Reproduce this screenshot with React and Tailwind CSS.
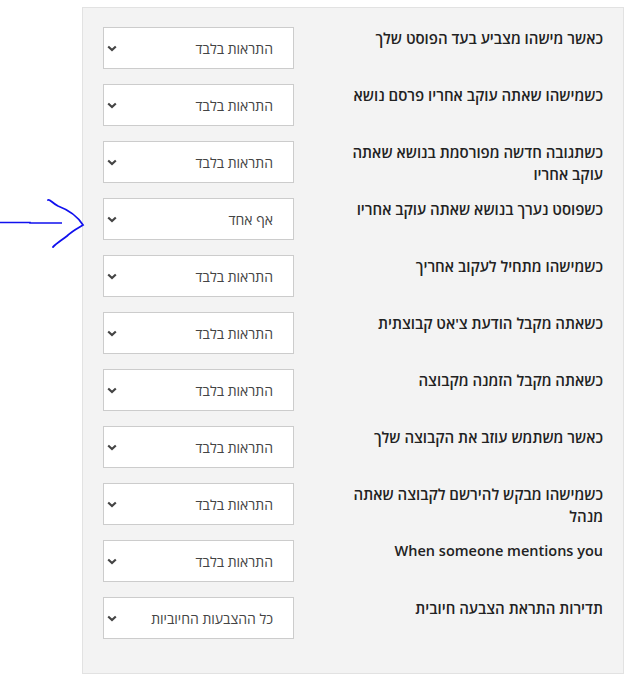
import React from 'react';

const rows = [
  { label: 'כאשר מישהו מצביע בעד הפוסט שלך', value: 'התראות בלבד' },
  { label: 'כשמישהו שאתה עוקב אחריו פרסם נושא', value: 'התראות בלבד' },
  { label: 'כשתגובה חדשה מפורסמת בנושא שאתה עוקב אחריו', value: 'התראות בלבד' },
  { label: 'כשפוסט נערך בנושא שאתה עוקב אחריו', value: 'אף אחד' },
  { label: 'כשמישהו מתחיל לעקוב אחריך', value: 'התראות בלבד' },
  { label: "כשאתה מקבל הודעת צ'אט קבוצתית", value: 'התראות בלבד' },
  { label: 'כשאתה מקבל הזמנה מקבוצה', value: 'התראות בלבד' },
  { label: 'כאשר משתמש עוזב את הקבוצה שלך', value: 'התראות בלבד' },
  { label: 'כשמישהו מבקש להירשם לקבוצה שאתה מנהל', value: 'התראות בלבד' },
  { label: 'When someone mentions you', value: 'התראות בלבד', en: true },
  { label: 'תדירות התראת הצבעה חיובית', value: 'כל ההצבעות החיוביות' },
];

function Chevron() {
  return (
    <svg width="10" height="7" viewBox="0 0 10 7" className="shrink-0">
      <path d="M1.2 1.5 L5 5 L8.8 1.5" fill="none" stroke="#444" strokeWidth="2.2" />
    </svg>
  );
}

function FakeSelect({ value }) {
  return (
    <div className="flex h-[42px] w-[191px] items-center justify-between border border-[#cccccc] bg-white pl-[3px] pr-[20px]">
      <span className="text-[14px] text-[#444]">{value}</span>
      <Chevron />
    </div>
  );
}

function Arrow() {
  return (
    <svg className="absolute left-0 top-[190px]" width="90" height="55" viewBox="0 0 90 55">
      <path d="M0 25.5 L30 25.5 L30 26 L62 26" fill="none" stroke="#1010ee" strokeWidth="1.6" />
      <path d="M48 3 C50 2 52 6 58 9 C66 12 76 17 83 28 C78 31 72 34 67 39 C62 43 57 46 53 50" fill="none" stroke="#1010ee" strokeWidth="1.8" strokeLinecap="round" />
    </svg>
  );
}

export default function App() {
  return (
    <div className="relative h-[695px] w-[634px] bg-white" style={{ fontFamily: '"Open Sans", "Noto Sans", "DejaVu Sans", sans-serif' }}>
      <Arrow />
      <div className="ml-[82px] mt-[7px] w-[542px] border border-[#e2e2e2] bg-[#f3f3f3] px-[20px] pb-[34px] pt-[19px]" dir="rtl">
        <div className="flex flex-col gap-[15px]">
          {rows.map((r, i) => (
            <div key={i} className="flex h-[42px] items-start">
              <div className={`w-[262px] font-semibold leading-[22px] text-[#222] ${r.en ? 'text-[14.5px]' : 'text-[15px]'}`}>{r.label}</div>
              <div className="flex flex-1 justify-end">
                <FakeSelect value={r.value} />
              </div>
            </div>
          ))}
        </div>
      </div>
    </div>
  );
}
